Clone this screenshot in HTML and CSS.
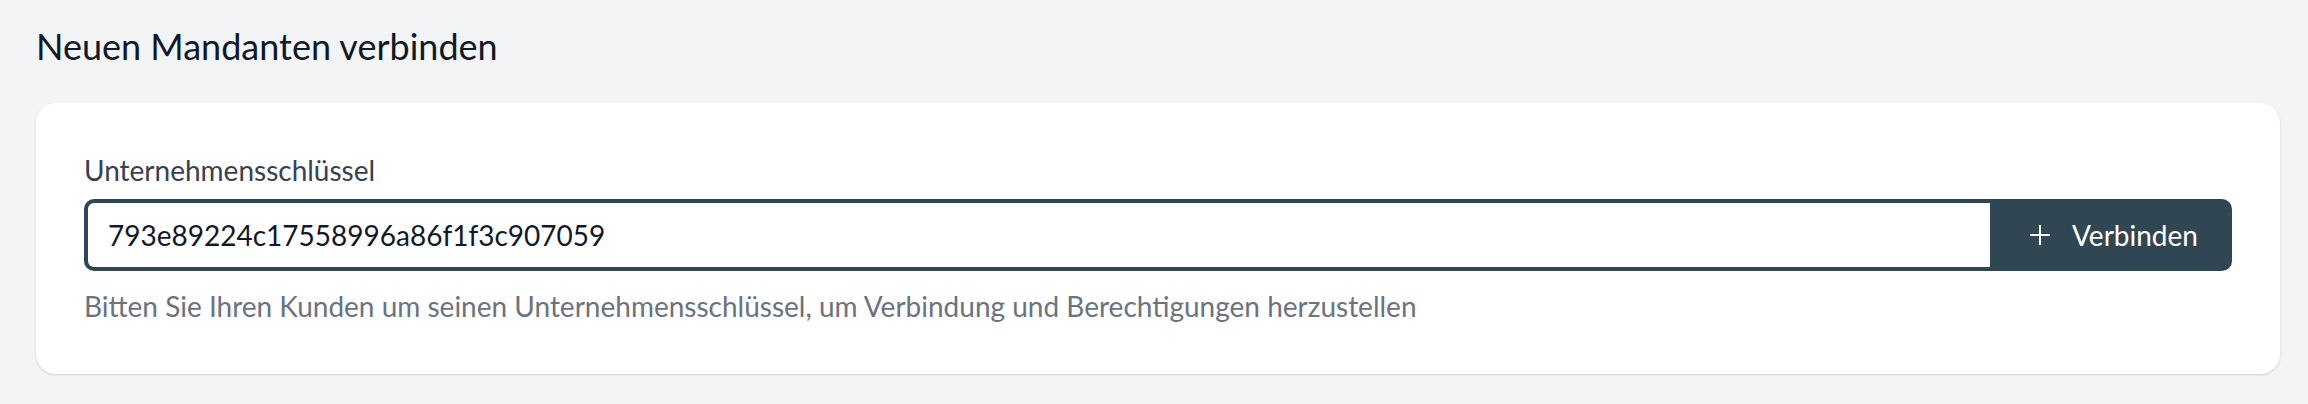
FILE: index.html
```html
<!DOCTYPE html>
<html lang="de">
<head>
<meta charset="utf-8">
<title>Neuen Mandanten verbinden</title>
<link rel="stylesheet" href="styles.css">
</head>
<body>
<main class="page">
  <h1 class="page-title">Neuen Mandanten verbinden</h1>
  <section class="card">
    <label class="field-label" for="key">Unternehmensschlüssel</label>
    <div class="input-group">
      <input id="key" class="key-input" type="text" value="793e89224c17558996a86f1f3c907059">
      <button class="connect-btn" type="button">
        <svg class="plus-icon" viewBox="0 0 22 22" width="22" height="22" aria-hidden="true">
          <path d="M11 1v20M1 11h20" stroke="currentColor" stroke-width="2" fill="none"/>
        </svg>
        <span>Verbinden</span>
      </button>
    </div>
    <p class="help-text">Bitten Sie Ihren Kunden um seinen Unternehmensschlüssel, um Verbindung und Berechtigungen herzustellen</p>
  </section>
</main>
</body>
</html>
```
FILE: styles.css
```css
html, body {
  margin: 0;
  padding: 0;
  background: #f3f4f6;
}
body {
  font-family: Lato, "Noto Sans", sans-serif;
  color: #111827;
}
.page {
  padding: 22px 28px 30px 36px;
}
.page-title {
  margin: 0;
  font-size: 36px;
  line-height: 48px;
  font-weight: 400;
  color: #111827;
}
.card {
  margin-top: 33px;
  background: #ffffff;
  border-radius: 20px;
  box-shadow: 0 1px 3px rgba(0,0,0,0.10), 0 1px 2px rgba(0,0,0,0.06);
  padding: 49px 48px 50px 48px;
  display: flex;
  flex-direction: column;
}
.field-label {
  font-size: 28px;
  line-height: 36px;
  color: #374151;
  margin-bottom: 11px;
}
.input-group {
  display: flex;
  height: 72px;
}
.key-input {
  flex: 1;
  min-width: 0;
  box-sizing: border-box;
  height: 72px;
  border: 4px solid #304753;
  border-right: none;
  border-radius: 10px 0 0 10px;
  padding: 0 20px;
  font-family: Lato, "Noto Sans", sans-serif;
  font-size: 28px;
  color: #111827;
  background: #ffffff;
  outline: none;
}
.connect-btn {
  display: flex;
  align-items: center;
  gap: 21px;
  width: 242px;
  box-sizing: border-box;
  padding: 0 33px 0 39px;
  border: none;
  border-radius: 0 10px 10px 0;
  background: #304753;
  color: #ffffff;
  font-family: Lato, "Noto Sans", sans-serif;
  font-size: 28px;
}
.plus-icon {
  flex: none;
}
.help-text {
  margin: 17px 0 0;
  font-size: 28px;
  line-height: 36px;
  color: #6b7280;
}
```
